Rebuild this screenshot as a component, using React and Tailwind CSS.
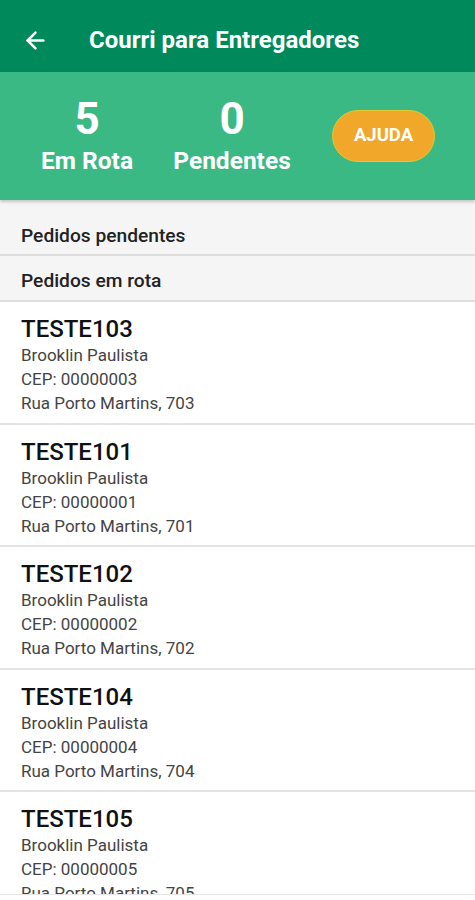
import { ArrowLeft } from 'lucide-react';

const pedidos = [
	{ code: 'TESTE103', bairro: 'Brooklin Paulista', cep: '00000003', rua: 'Rua Porto Martins, 703' },
	{ code: 'TESTE101', bairro: 'Brooklin Paulista', cep: '00000001', rua: 'Rua Porto Martins, 701' },
	{ code: 'TESTE102', bairro: 'Brooklin Paulista', cep: '00000002', rua: 'Rua Porto Martins, 702' },
	{ code: 'TESTE104', bairro: 'Brooklin Paulista', cep: '00000004', rua: 'Rua Porto Martins, 704' },
	{ code: 'TESTE105', bairro: 'Brooklin Paulista', cep: '00000005', rua: 'Rua Porto Martins, 705' },
];

function App() {
	return (
		<div className="flex h-[900px] w-[475px] flex-col overflow-hidden bg-white font-['Roboto',sans-serif]">
			{/* toolbar */}
			<div className="flex h-[72px] shrink-0 items-center bg-[#00895a] px-[22px] pt-[8px]">
				<ArrowLeft size={27} strokeWidth={2.2} className="text-white" />
				<h1 className="ml-[40px] text-[24px] font-bold text-white">Courri para Entregadores</h1>
			</div>

			{/* stats */}
			<div className="relative flex h-[128px] shrink-0 items-center bg-[#3bb984] shadow-[0_2px_3px_rgba(0,0,0,0.2)]">
				<div className="flex w-[174px] flex-col items-center pt-[4px]">
					<span className="text-[44px] font-bold leading-[46px] text-white">5</span>
					<span className="text-[24.5px] font-bold leading-[38px] text-white">Em Rota</span>
				</div>
				<div className="flex w-[116px] flex-col items-center pt-[4px]">
					<span className="text-[44px] font-bold leading-[46px] text-white">0</span>
					<span className="text-[24.5px] font-bold leading-[38px] text-white">Pendentes</span>
				</div>
				<button className="ml-[42px] h-[52px] w-[103px] rounded-full border border-[#e2c832] bg-[#f1a82a] text-[18.5px] font-bold text-white">
					AJUDA
				</button>
			</div>

			{/* sections */}
			<div className="flex h-[56px] shrink-0 items-center border-b-2 border-[#dedede] bg-[#f5f5f5] px-[21px] pt-[18px]">
				<span className="text-[19.2px] font-medium text-[#222]">Pedidos pendentes</span>
			</div>
			<div className="flex h-[46px] shrink-0 items-center border-b-2 border-[#dedede] bg-[#f5f5f5] px-[21px] pt-[6px]">
				<span className="text-[19.2px] font-medium text-[#222]">Pedidos em rota</span>
			</div>

			{/* list */}
			<div className="flex min-h-0 flex-1 flex-col overflow-hidden">
				{pedidos.map((p) => (
					<div key={p.code} className="h-[122.5px] shrink-0 border-b-2 border-[#e3e3e3] px-[21px] pt-[13px]">
						<div className="text-[24px] font-medium leading-[28px] text-[#111]">{p.code}</div>
						<div className="text-[17px] leading-[24px] text-[#444]">{p.bairro}</div>
						<div className="text-[17px] leading-[24px] text-[#444]">CEP: {p.cep}</div>
						<div className="text-[17px] leading-[24px] text-[#444]">{p.rua}</div>
					</div>
				))}
			</div>
			<div className="h-[6px] shrink-0 border-t border-[#e6e6e6] bg-white" />
		</div>
	);
}

export default App;
